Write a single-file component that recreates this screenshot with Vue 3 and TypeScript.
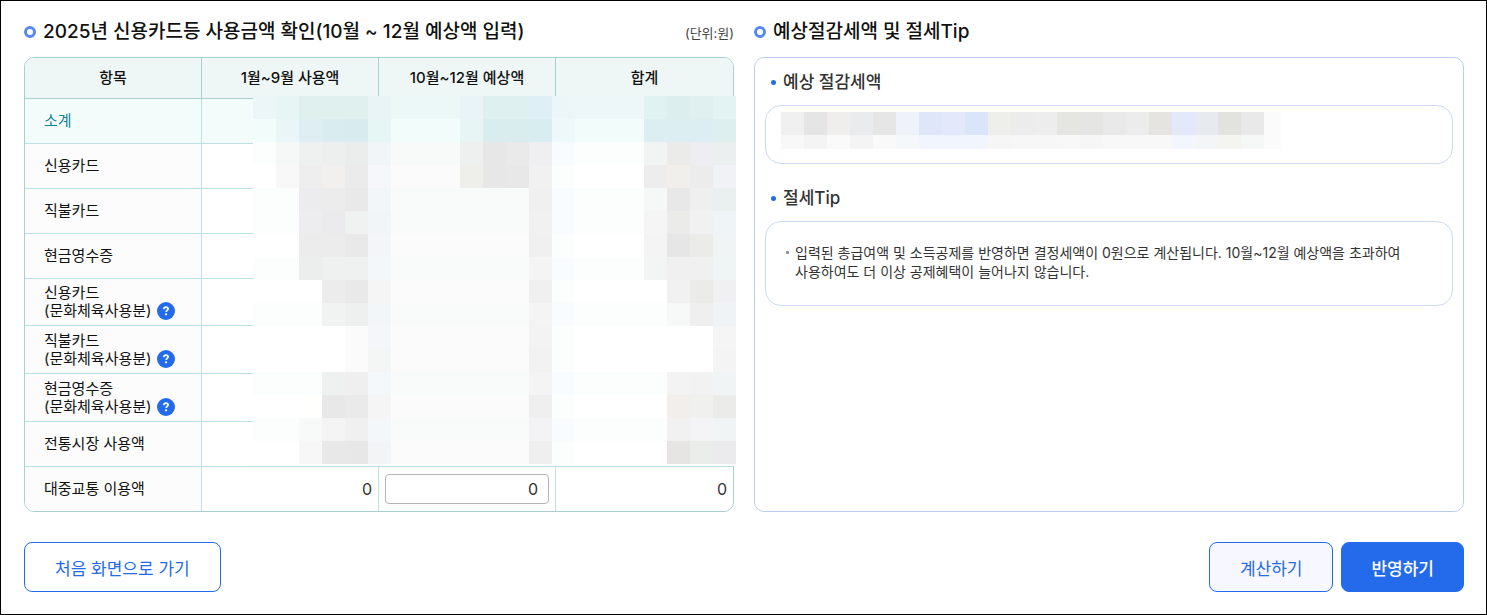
<script setup lang="ts">
import { ref } from 'vue'

interface UsageRow {
  label: string
  detail?: string
  kind?: 'subtotal' | 'tall'
}

interface Cell {
  x: number
  y: number
  w: number
  h: number
  fill: string
}

const rows: UsageRow[] = [
  { label: '소계', kind: 'subtotal' },
  { label: '신용카드' },
  { label: '직불카드' },
  { label: '현금영수증' },
  { label: '신용카드', detail: '(문화체육사용분)', kind: 'tall' },
  { label: '직불카드', detail: '(문화체육사용분)', kind: 'tall' },
  { label: '현금영수증', detail: '(문화체육사용분)', kind: 'tall' },
  { label: '전통시장 사용액' },
]

const transit = ref('0')

const CELL = 23

// One line per mosaic row, one colour per 23px cell; "color*n" repeats a colour.
const usageMask: string[] = [
  'ecf6f8 e8f5f5 e0f0ef*3 e8f4f6 ecf7f8*3 e8f4f7 def0ef*2 def0f5 ecf5f8 edf6f8*3 e1f2f2 dceeed e0f0f0 e3f3f4',
  'f2fcfb e9f5f7 dfeef3 d9edf0 d8ecef e6f6f5 f2fcfb*3 e8f5f5 d9edee*2 d7edf0 eef7fa f2fcfb*3 dceef2*3 ddf0ef',
  'fcfdfd f6f7f7 eff0f0 edeeee ebecec f1f5f7 f8faf9*3 eeefef e6e7e6 e9eae9 efeff2 f8fcfe fcfefd*3 f2f4f3 ebecea eeeef2 ebeff0',
  'ffffff f8f8f8 eeeeee f1f0ee ebebeb f6f7fb fbfbfb*3 eeeeeb e7e7e7 e8e8e8 f1f1f1 fcfefe ffffff*3 ededed f0efec ececec f1f2f5',
  'fcfefd fcfefd ececef ebeceb e8e9e8 f3f6f8 f9fbfa*6 eff0ef f8fcfe fcfefd*3 f6f8f7 e7e8e7 eeefee eaeff0',
  'fcfefd fcfefd ededf0 ebebee f0f2f1 f1f5f7 f9fbfa*6 f0f1f0 f8fcfe fcfefd*3 f4f5f4 ebecea f0f1f0 eff4f6',
  'ffffff*2 ececec ececec e9e9e9 f4f5f8 fbfbfb*6 f0f0f0 fcfefe ffffff*3 f4f4f4 e6e6e7 ebebe8 f0f4f5',
  'fcfefd*2 eceeed eff0f0 eff0f0 f4f7f9 f9fbfa*6 f3f4f3 f8fcfe fcfefd*3 f3f5f4 eff0ef eff0ef eff4f5',
  'ffffff*3 ececec e9e9e9 f4f5f4 fbfbfb*6 f0f0f0 fcfefe ffffff*4 f1f1f1 ebebe8 f0f0f3',
  'fcfefd*3 f1f3f2 eeefef f3f6f8 f9fbfa*6 f3f4f3 f8fcfe fcfefd*4 f7f9f8 eeefee eff3f5',
  'ffffff*4 fbfbfb f5f6f9 fbfbfb*6 f3f3f3 fcfefe ffffff*6 f4f5f4',
  'ffffff*4 fbfbfb f4f6f5 fbfbfb*6 f2f2f2 fcfefe ffffff*6 f3f4f3',
  'fcfefd*3 eff0f0 eeefee f4f8fa f9fbfa*6 f3f4f3 f8fcfe fcfefd*4 f2f3f2 f1f2f1 f0f4f5',
  'ffffff*2 fffffd e8e8e8 eaeaea f4f5f4 fbfbfb*6 efefef fcfefe ffffff*4 f1eeec f0f0ef ebecea',
  'fcfefd*2 f8faf9 f3f4f3 eff0ef f4f7f9 f9fbfa*6 f3f3f6 f8fcfe fcfefd*4 f0f1f0 f4f4f7 f0f4f5',
  'ffffff*2 f7f7f7 e8e8e8 e7e7e7 f3f4f6 fbfbfb*6 efefef fcfefe ffffff*4 e7e5e3 ebedeb ebebee',
]

const savingMask: string[] = [
  'f0f0f0 e5e5e5 efeeec e9ebed e6e6e6 eff2fb e0e6fa e3e9fb dae5fa eeeeeb ececec ededed e5e5e2 e5e5e4 e9e9e9 ececec e6e4e1 e3e9fb e7ebf0 e2e2df e9e9e9',
  'f8f8f8 f4f4f4 fafafa f4f4f4 f9f9f9 f4f8fb f0f5fe*3 f6f6f6 f7f7f7 f7f7f7 f8f8f8 f6f6f6 f8f8f8 f8f8f8 f8f8f8 f3f6ff f4f5f7 f4f4f1 f6f8f7',
]

function buildCells(mask: string[], lastHeight: number): Cell[] {
  return mask.flatMap((line, r) => {
    const fills = line.split(' ').flatMap((part) => {
      const [color, count] = part.split('*')
      return Array<string>(Number(count ?? 1)).fill('#' + color)
    })
    const h = r === mask.length - 1 ? lastHeight : CELL
    return fills.map((fill, c) => ({ x: c * CELL, y: r * CELL, w: CELL, h, fill }))
  })
}

const usageCells = buildCells(usageMask, CELL)
const savingCells = buildCells(savingMask, 14)
</script>

<template>
  <main class="page">
    <div class="columns">
      <section class="panel">
        <header class="panel-head">
          <h2 class="title">2025년 신용카드등 사용금액 확인(10월 ~ 12월 예상액 입력)</h2>
          <span class="unit">(단위:원)</span>
        </header>
        <div class="table-area">
          <div class="table-frame">
            <table class="usage">
              <thead>
                <tr>
                  <th scope="col">항목</th>
                  <th scope="col">1월~9월 사용액</th>
                  <th scope="col">10월~12월 예상액</th>
                  <th scope="col">합계</th>
                </tr>
              </thead>
              <tbody>
                <tr v-for="(row, i) in rows" :key="i" :class="row.kind">
                  <th scope="row">
                    {{ row.label }}
                    <span v-if="row.detail" class="detail">
                      {{ row.detail }}
                      <button type="button" class="help" aria-label="도움말">
                        <svg viewBox="0 0 18 18" width="18" height="18" aria-hidden="true">
                          <circle cx="9" cy="9" r="9" fill="#246beb" />
                          <path
                            d="M6.9 7.2C6.9 5.9 7.8 5.2 9 5.2s2.1.7 2.1 1.8c0 1.4-2 1.5-2 3.1"
                            fill="none"
                            stroke="#fff"
                            stroke-width="1.7"
                          />
                          <circle cx="9.1" cy="12.3" r="1.1" fill="#fff" />
                        </svg>
                      </button>
                    </span>
                  </th>
                  <td></td>
                  <td></td>
                  <td></td>
                </tr>
                <tr>
                  <th scope="row">대중교통 이용액</th>
                  <td>0</td>
                  <td class="entry">
                    <input v-model="transit" type="text" inputmode="numeric" aria-label="대중교통 이용액 10월~12월 예상액" />
                  </td>
                  <td>0</td>
                </tr>
              </tbody>
            </table>
          </div>
          <svg class="usage-mask" viewBox="0 0 483 370" width="483" height="370" shape-rendering="crispEdges" aria-hidden="true">
            <rect width="483" height="370" fill="#fcfdfd" />
            <rect v-for="(c, i) in usageCells" :key="i" :x="c.x" :y="c.y" :width="c.w" :height="c.h" :fill="c.fill" />
          </svg>
        </div>
      </section>

      <section class="panel">
        <header class="panel-head">
          <h2 class="title">예상절감세액 및 절세Tip</h2>
        </header>
        <div class="card">
          <h3 class="subtitle">예상 절감세액</h3>
          <div class="box saving">
            <svg viewBox="0 0 500 37" width="500" height="37" shape-rendering="crispEdges" aria-hidden="true">
              <rect x="483" width="17" height="37" fill="#fbfbfb" />
              <rect v-for="(c, i) in savingCells" :key="i" :x="c.x" :y="c.y" :width="c.w" :height="c.h" :fill="c.fill" />
            </svg>
          </div>
          <h3 class="subtitle">절세Tip</h3>
          <ul class="box tips">
            <li>입력된 총급여액 및 소득공제를 반영하면 결정세액이 0원으로 계산됩니다. 10월~12월 예상액을 초과하여 사용하여도 더 이상 공제혜택이 늘어나지 않습니다.</li>
          </ul>
        </div>
      </section>
    </div>

    <footer class="actions">
      <button type="button" class="btn">처음 화면으로 가기</button>
      <div class="group">
        <button type="button" class="btn soft">계산하기</button>
        <button type="button" class="btn primary">반영하기</button>
      </div>
    </footer>
  </main>
</template>

<style>
body {
  margin: 0;
  background: #fff;
}
</style>

<style scoped>
.page {
  box-sizing: border-box;
  min-height: 100vh;
  padding: 16px 22px 22px 23px;
  border: 1px solid #000;
  background: #fff;
  color: #111;
  font-family: Inter, 'Noto Sans CJK KR', sans-serif;
  font-size: 15px;
  word-break: keep-all;
}

.columns {
  display: grid;
  grid-template-columns: 1fr 1fr;
  gap: 20px;
}

.panel {
  display: flex;
  flex-direction: column;
  min-width: 0;
}

.panel-head {
  display: flex;
  align-items: center;
  justify-content: space-between;
  height: 30px;
  margin-bottom: 10px;
}

.title {
  display: flex;
  align-items: center;
  gap: 7px;
  margin: 0;
  font-size: 19px;
  font-weight: 500;
  line-height: 30px;
}

.title::before {
  content: '';
  box-sizing: border-box;
  width: 12px;
  height: 12px;
  border: 3px solid #568af0;
  border-radius: 50%;
}

.unit {
  color: #444;
  font-size: 13px;
}

.table-area {
  position: relative;
}

.table-frame {
  overflow: hidden;
  border: 1px solid #a9cfd1;
  border-radius: 10px;
}

.usage {
  width: 100%;
  table-layout: fixed;
  border-spacing: 0;
}

.usage th,
.usage td {
  box-sizing: border-box;
  height: 45px;
  padding: 0 6px;
  border-right: 1px solid #bce0e4;
  border-bottom: 1px solid #bce0e4;
  font-weight: 400;
  line-height: 18px;
}

.usage th:last-child,
.usage td:last-child {
  border-right: 0;
}

.usage tbody tr:last-child > * {
  height: 44px;
  border-bottom: 0;
}

.usage thead th {
  height: 41px;
  border-color: #a9cfd1;
  background: #eef7f6;
  font-weight: 500;
  text-align: center;
}

.usage tbody th {
  padding-left: 19px;
  background: #fcfcfc;
  text-align: left;
}

.usage td {
  color: #333;
  font-size: 16px;
  text-align: right;
}

.usage .subtotal th,
.usage .subtotal td {
  background: #f3fcfb;
}

.usage .subtotal th {
  color: #0e8494;
}

.usage .tall > * {
  height: 47px;
}

.usage .tall + .tall > * {
  height: 48px;
}

.detail {
  display: flex;
  align-items: center;
  gap: 5px;
  height: 18px;
}

.help {
  display: flex;
  padding: 0;
  border: 0;
  background: none;
  cursor: pointer;
}

.usage .entry input {
  box-sizing: border-box;
  display: block;
  width: 100%;
  height: 30px;
  padding: 0 10px;
  border: 1px solid #b4b4b4;
  border-radius: 4px;
  background: #fff;
  color: #333;
  font: inherit;
  text-align: right;
}

.usage-mask {
  position: absolute;
  top: 39px;
  right: -2px;
}

.card {
  flex: 1;
  padding: 9px 10px;
  border: 1px solid #bccdec;
  border-radius: 10px;
}

.subtitle {
  display: flex;
  align-items: center;
  gap: 7px;
  margin: 0 0 8px;
  padding-left: 6px;
  color: #333;
  font-size: 17px;
  font-weight: 500;
  line-height: 30px;
}

.subtitle::before {
  content: '';
  width: 5px;
  height: 5px;
  border-radius: 50%;
  background: #246beb;
}

.box {
  box-sizing: border-box;
  margin: 0;
  border: 1px solid #cddaf2;
  border-radius: 16px;
}

.saving {
  min-height: 59px;
  margin-bottom: 19px;
  padding: 6px 15px;
}

.saving svg {
  display: block;
}

.tips {
  min-height: 85px;
  padding: 21px 29px;
  color: #333;
  font-size: 14px;
  line-height: 19px;
  list-style: none;
}

.tips li {
  position: relative;
}

.tips li::before {
  content: '';
  position: absolute;
  top: 8px;
  left: -9px;
  width: 3px;
  height: 3px;
  background: #999;
}

.actions {
  display: flex;
  justify-content: space-between;
  margin-top: 30px;
}

.group {
  display: flex;
  gap: 8px;
}

.btn {
  box-sizing: border-box;
  height: 50px;
  padding: 0 30px;
  border: 1px solid #246beb;
  border-radius: 8px;
  background: #fff;
  color: #246beb;
  font: inherit;
  font-size: 17px;
  cursor: pointer;
}

.soft {
  background: #f7f8ff;
}

.primary {
  padding: 0 29px;
  background: #246beb;
  color: #fff;
  font-weight: 500;
}
</style>
